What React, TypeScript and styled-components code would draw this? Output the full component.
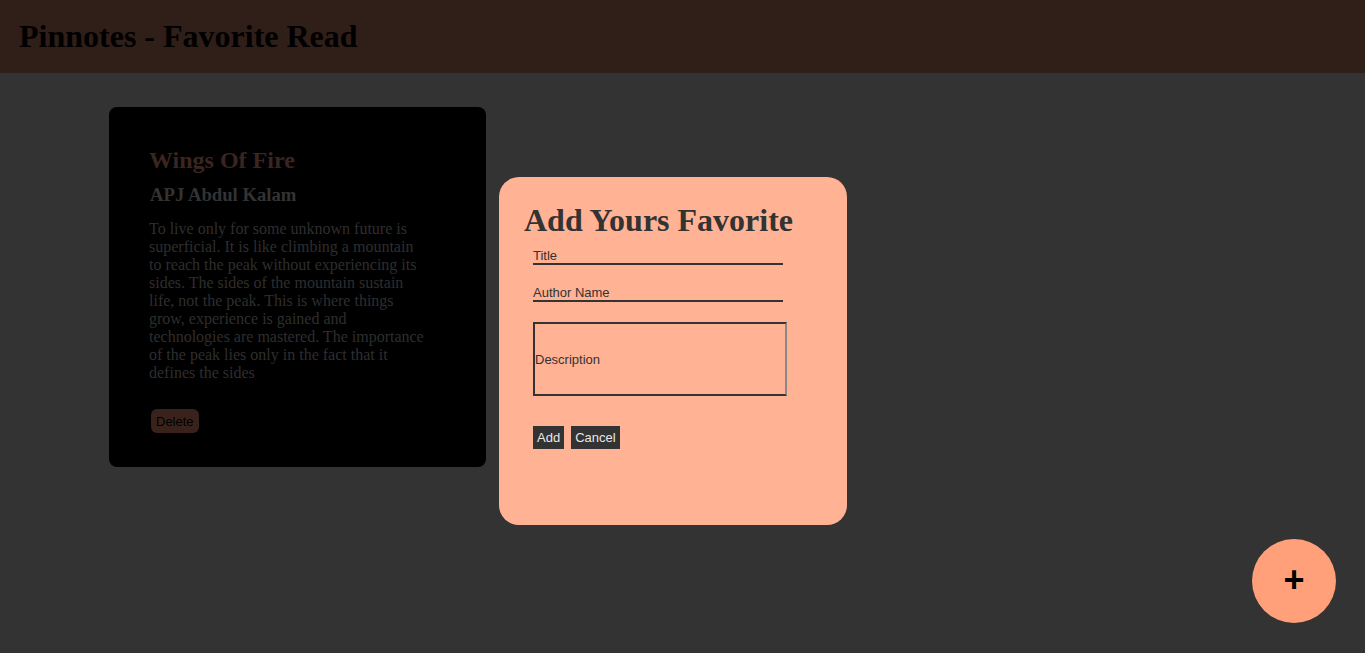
import React from "react";
import styled, { createGlobalStyle } from "styled-components";

const Global = createGlobalStyle`
  html, body { margin: 0; padding: 0; }
  body {
    background: #333333;
    font-family: "Liberation Serif", "Times New Roman", serif;
    min-height: 653px;
  }
  * { box-sizing: border-box; }
`;

const Page = styled.div`
  min-height: 653px;
  background: #333333;
  position: relative;
`;

const Header = styled.header`
  height: 73px;
  background: #301e19;
  display: flex;
  align-items: center;
  padding: 0 19px 1px;
`;

const HeaderTitle = styled.h1`
  margin: 0;
  font-family: "Liberation Serif", "Times New Roman", serif;
  font-weight: bold;
  font-size: 32px;
  color: #000;
`;

const Main = styled.main`
  display: flex;
  align-items: flex-start;
  padding: 34px 0 0 109px;
`;

const Card = styled.article`
  width: 377px;
  height: 360px;
  background: #000;
  border-radius: 8px;
  padding: 37px 40px 0 40px;
  display: flex;
  flex-direction: column;
`;

const CardTitle = styled.h2`
  margin: 0;
  font-size: 24px;
  font-weight: bold;
  color: #3b2520;
  line-height: 32px;
`;

const CardAuthor = styled.h3`
  margin: 8px 0 0 1px;
  font-size: 18.7px;
  font-weight: bold;
  color: #333;
  line-height: 22px;
`;

const CardBody = styled.p`
  margin: 14px 0 0 0;
  font-size: 16px;
  line-height: 18px;
  color: #2e2e2e;
  width: 278px;
`;

const DeleteButton = styled.button`
  align-self: flex-start;
  margin: 27px 0 0 2px;
  height: 24px;
  padding: 0 5px;
  border: none;
  border-radius: 6px;
  background: #3a221c;
  color: #000;
  font-family: "Liberation Sans", Arial, sans-serif;
  font-size: 13px;
`;

const Modal = styled.section`
  width: 348px;
  height: 348px;
  margin: 70px 0 0 13px;
  background: #ffb294;
  border-radius: 20px;
  padding: 24px 25px 0 25px;
  display: flex;
  flex-direction: column;
`;

const ModalTitle = styled.h1`
  margin: 0;
  font-family: "Liberation Serif", "Times New Roman", serif;
  font-weight: bold;
  font-size: 32px;
  line-height: 38px;
  color: #333;
`;

const Form = styled.form`
  display: flex;
  flex-direction: column;
  padding-left: 9px;
  margin-top: 9px;
`;

const LineInput = styled.input`
  width: 250px;
  height: 17px;
  border: none;
  border-bottom: 2px solid #333;
  background: transparent;
  padding: 0;
  margin-bottom: 20px;
  font-family: "Liberation Sans", Arial, sans-serif;
  font-size: 13px;
  color: #333;
  outline: none;
  &::placeholder { color: #333; opacity: 1; }
`;

const TextArea = styled.textarea`
  width: 254px;
  height: 74px;
  border: 2px solid #333;
  border-right-color: #888;
  background: transparent;
  padding: 28px 0 0 0;
  resize: none;
  font-family: "Liberation Sans", Arial, sans-serif;
  font-size: 13px;
  color: #333;
  outline: none;
  &::placeholder { color: #333; opacity: 1; }
`;

const Buttons = styled.div`
  display: flex;
  gap: 7px;
  margin-top: 30px;
`;

const DarkButton = styled.button`
  height: 23px;
  padding: 0 4px;
  border: none;
  background: #333;
  color: #e8e8e8;
  font-family: "Liberation Sans", Arial, sans-serif;
  font-size: 13px;
`;

const Fab = styled.button`
  position: fixed;
  left: 1252px;
  top: 539px;
  width: 84px;
  height: 84px;
  border-radius: 50%;
  border: none;
  background: #ffa07a;
  color: #000;
  font-family: "Liberation Sans", Arial, sans-serif;
  font-size: 36px;
  font-weight: bold;
  line-height: 1;
  padding: 0 0 3px 0;
  display: flex;
  align-items: center;
  justify-content: center;
`;

export default function App() {
  return (
    <Page>
      <Global />
      <Header>
        <HeaderTitle>Pinnotes - Favorite Read</HeaderTitle>
      </Header>
      <Main>
        <Card>
          <CardTitle>Wings Of Fire</CardTitle>
          <CardAuthor>APJ Abdul Kalam</CardAuthor>
          <CardBody>
            To live only for some unknown future is superficial. It is like
            climbing a mountain to reach the peak without experiencing its
            sides. The sides of the mountain sustain life, not the peak. This
            is where things grow, experience is gained and technologies are
            mastered. The importance of the peak lies only in the fact that it
            defines the sides
          </CardBody>
          <DeleteButton>Delete</DeleteButton>
        </Card>
        <Modal>
          <ModalTitle>Add Yours Favorite</ModalTitle>
          <Form onSubmit={(e) => e.preventDefault()}>
            <LineInput placeholder="Title" />
            <LineInput placeholder="Author Name" />
            <TextArea placeholder="Description" />
            <Buttons>
              <DarkButton type="button">Add</DarkButton>
              <DarkButton type="button">Cancel</DarkButton>
            </Buttons>
          </Form>
        </Modal>
      </Main>
      <Fab>+</Fab>
    </Page>
  );
}
